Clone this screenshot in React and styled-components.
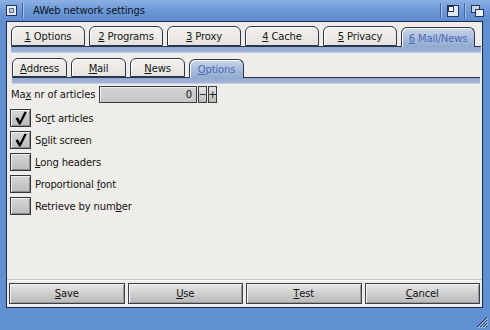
import React from "react";
import styled, { createGlobalStyle } from "styled-components";

const GlobalStyle = createGlobalStyle`
  html, body {
    margin: 0;
    padding: 0;
    background: #6190d2;
  }
  body {
    font-family: "DejaVu Sans", "Liberation Sans", sans-serif;
    font-size: 10px;
    letter-spacing: -0.15px;
    color: #141414;
  }
`;

const topTabs = [
  { key: "1", label: "Options" },
  { key: "2", label: "Programs" },
  { key: "3", label: "Proxy" },
  { key: "4", label: "Cache" },
  { key: "5", label: "Privacy" },
  { key: "6", label: "Mail/News", active: true },
];

const subTabs = [
  { key: "A", post: "ddress" },
  { key: "M", post: "ail" },
  { key: "N", post: "ews" },
  { key: "O", post: "ptions", active: true },
];

const options = [
  { pre: "So", key: "r", post: "t articles", checked: true },
  { pre: "S", key: "p", post: "lit screen", checked: true },
  { pre: "", key: "L", post: "ong headers", checked: false },
  { pre: "Proportional ", key: "f", post: "ont", checked: false },
  { pre: "Retrieve by num", key: "b", post: "er", checked: false },
];

const buttons = [
  { key: "S", post: "ave" },
  { key: "U", post: "se" },
  { key: "T", post: "est" },
  { key: "C", post: "ancel" },
];

function CloseIcon() {
  return (
    <svg width="11" height="11" viewBox="0 0 11 11">
      <rect x="0.5" y="0.5" width="10" height="10" fill="#e6ecf6" stroke="#22345c" />
      <rect x="3.5" y="3.5" width="4" height="4" fill="#b9c6dc" stroke="#5b6f96" />
    </svg>
  );
}

function ZoomIcon() {
  return (
    <svg width="12" height="12" viewBox="0 0 12 12">
      <rect x="0.5" y="0.5" width="11" height="11" fill="#dfe7f4" stroke="#22345c" />
      <rect x="1.5" y="1.5" width="5" height="5" fill="#ffffff" stroke="#22345c" />
    </svg>
  );
}

function DepthIcon() {
  return (
    <svg width="13" height="12" viewBox="0 0 13 12">
      <rect x="0.5" y="0.5" width="8" height="7" fill="#c9d5ea" stroke="#22345c" />
      <rect x="4.5" y="4.5" width="8" height="7" fill="#eef2fa" stroke="#22345c" />
    </svg>
  );
}

function ResizeIcon() {
  return (
    <svg width="12" height="12" viewBox="0 0 12 12">
      <path d="M11 1 L1 11 M11 4 L4 11 M11 7 L7 11 M11 10 L10 11" stroke="#22345c" strokeWidth="1" />
      <path d="M12 2 L2 12 M12 5 L5 12 M12 8 L8 12" stroke="#b9cdee" strokeWidth="1" />
    </svg>
  );
}

function Check() {
  return (
    <svg width="18" height="16" viewBox="0 0 18 16">
      <path d="M3.5 8.5 L6 7.3 L7.9 11 L12.6 1.5 L14.8 2.2 L8.6 14.6 L7 14.6 Z" fill="#000" />
    </svg>
  );
}

export default function App() {
  return (
    <>
      <GlobalStyle />
      <Window>
        <TitleBar>
          <Gadget>
            <CloseIcon />
          </Gadget>
          <Divider />
          <Title>AWeb network settings</Title>
          <Divider />
          <Gadget>
            <ZoomIcon />
          </Gadget>
          <Divider />
          <Gadget $right>
            <DepthIcon />
          </Gadget>
        </TitleBar>

        <Frame>
          <Body>
            <TabRow>
              {topTabs.map((t) => (
                <Tab key={t.key} $active={t.active} $width={74}>
                  <u>{t.key}</u>&nbsp;{t.label}
                </Tab>
              ))}
            </TabRow>
            <TabBar />

            <TabRow $sub>
              {subTabs.map((t) => (
                <Tab key={t.key} $active={t.active} $width={55} $sub>
                  <u>{t.key}</u>
                  {t.post}
                </Tab>
              ))}
            </TabRow>
            <TabBar $sub />

            <Form>
              <FieldRow>
                <FieldLabel>
                  Ma<u>x</u> nr of articles
                </FieldLabel>
                <NumberBox>0</NumberBox>
                <StepButton>−</StepButton>
                <StepButton>+</StepButton>
              </FieldRow>

              <Options>
                {options.map((o) => (
                  <OptionRow key={o.post}>
                    <CheckBox>{o.checked && <Check />}</CheckBox>
                    <span>
                      {o.pre}
                      <u>{o.key}</u>
                      {o.post}
                    </span>
                  </OptionRow>
                ))}
              </Options>
            </Form>

            <Separator />
            <ButtonRow>
              {buttons.map((b) => (
                <Button key={b.key}>
                  <u>{b.key}</u>
                  {b.post}
                </Button>
              ))}
            </ButtonRow>
          </Body>
        </Frame>

        <BottomBorder>
          <ResizeIcon />
        </BottomBorder>
      </Window>
    </>
  );
}

const Window = styled.div`
  width: 490px;
  height: 330px;
  display: flex;
  flex-direction: column;
  background: #6190d2;
  overflow: hidden;
`;

const TitleBar = styled.div`
  height: 21px;
  flex: none;
  display: flex;
  align-items: center;
  background: linear-gradient(#8cb0e3, #6b97d6 55%, #5f8ccf);
`;

const Gadget = styled.div`
  display: flex;
  align-items: center;
  justify-content: center;
  width: ${(p) => (p.$right ? "13px" : "12px")};
  margin: 0 ${(p) => (p.$right ? "6px" : "5px")} 0 5px;
`;

const Divider = styled.div`
  width: 1px;
  height: 15px;
  background: #3f629c;
  border-right: 1px solid #a9c3ea;
`;

const Title = styled.div`
  flex: 1;
  padding-left: 9px;
  font-size: 10px;
  color: #0c1424;
  white-space: nowrap;
`;

const Frame = styled.div`
  flex: 1;
  display: flex;
  padding: 0 7px 0 6px;
  min-height: 0;
`;

const Body = styled.div`
  flex: 1;
  display: flex;
  flex-direction: column;
  border: 1px solid #1c2a4e;
  background: #efede9;
  padding: 0 1px 3px 2px;
`;

const TabRow = styled.div`
  display: flex;
  align-items: flex-end;
  gap: 4px;
  padding-left: ${(p) => (p.$sub ? "3px" : "2px")};
  margin-top: ${(p) => (p.$sub ? "5px" : "4px")};
`;

const Tab = styled.div`
  position: relative;
  z-index: ${(p) => (p.$active ? 1 : 0)};
  box-sizing: border-box;
  width: ${(p) => p.$width}px;
  height: ${(p) => (p.$sub ? 19 : 20)}px;
  margin-bottom: ${(p) => (p.$active ? "-1px" : "0")};
  display: flex;
  align-items: center;
  justify-content: center;
  border: 1px solid #2f3548;
  border-bottom: ${(p) => (p.$active ? "none" : "1px solid #2f3548")};
  border-radius: 6px 6px 0 0;
  box-shadow: inset 1px 1px 0 #ffffff;
  background: ${(p) =>
    p.$active
      ? "linear-gradient(#cad7ec, #a7badb 60%, #93aad1)"
      : "linear-gradient(#f3f1ee, #e6e3de)"};
  color: ${(p) => (p.$active ? "#4a6cb3" : "#161616")};
  padding-top: 1px;
  white-space: nowrap;

  u {
    text-underline-offset: 1px;
  }
`;

const TabBar = styled.div`
  height: 5px;
  margin-left: ${(p) => (p.$sub ? "3px" : "2px")};
  margin-right: ${(p) => (p.$sub ? "1px" : "0")};
  border-top: 1px solid #2f3548;
  background: linear-gradient(#93aad1, #a2b6d9);
  border-bottom: 1px solid #c3cfe3;
`;

const Form = styled.div`
  display: flex;
  flex-direction: column;
  padding: 2px 0 0 1px;
`;

const FieldRow = styled.div`
  display: flex;
  align-items: center;
  height: 17px;
`;

const FieldLabel = styled.div`
  width: 89px;
  padding-left: 1px;
  box-sizing: border-box;
  white-space: nowrap;
`;

const NumberBox = styled.div`
  box-sizing: border-box;
  width: 98px;
  height: 17px;
  border: 1px solid #3a3a42;
  background: linear-gradient(#d2d2d2, #c6c6c6);
  box-shadow: inset 1px 1px 0 #ececec;
  text-align: right;
  padding-right: 4px;
  line-height: 15px;
`;

const StepButton = styled.div`
  box-sizing: border-box;
  width: 9px;
  height: 17px;
  margin-left: 1px;
  border: 1px solid #3a3a42;
  background: linear-gradient(#e4e4e4, #bdbdbd);
  display: flex;
  align-items: center;
  justify-content: center;
  font-size: 10px;
  line-height: 1;
`;

const Options = styled.div`
  display: flex;
  flex-direction: column;
  gap: 4px;
  margin-top: 6px;
`;

const OptionRow = styled.div`
  display: flex;
  align-items: center;
  gap: 4px;
  height: 18px;
`;

const CheckBox = styled.div`
  box-sizing: border-box;
  width: 21px;
  height: 18px;
  border: 1px solid #35353c;
  background: linear-gradient(#d6d6d6, #bcbcbc);
  box-shadow: inset 1px 1px 0 #f2f2f2, inset -1px -1px 0 #8c8c8c;
  display: flex;
  align-items: center;
  justify-content: center;
`;

const Separator = styled.div`
  margin-top: auto;
  height: 1px;
  background: #c9c6c1;
  border-bottom: 1px solid #fbfaf8;
  margin-left: -2px;
  margin-right: -1px;
`;

const ButtonRow = styled.div`
  display: grid;
  grid-template-columns: repeat(4, 1fr);
  gap: 3px;
  margin-top: 2px;
  padding-right: 1px;
`;

const Button = styled.div`
  box-sizing: border-box;
  height: 21px;
  border: 1px solid #3c3e4a;
  background: linear-gradient(#e8e8e8, #cfcfcf 50%, #b9b9b9);
  box-shadow: inset 1px 1px 0 #f6f6f6, inset -1px -1px 0 #9a9a9a;
  display: flex;
  align-items: center;
  justify-content: center;
  color: #141414;
`;

const BottomBorder = styled.div`
  height: 22px;
  flex: none;
  display: flex;
  justify-content: flex-end;
  align-items: flex-end;
  padding: 0 2px 2px 0;
  box-sizing: border-box;
`;
